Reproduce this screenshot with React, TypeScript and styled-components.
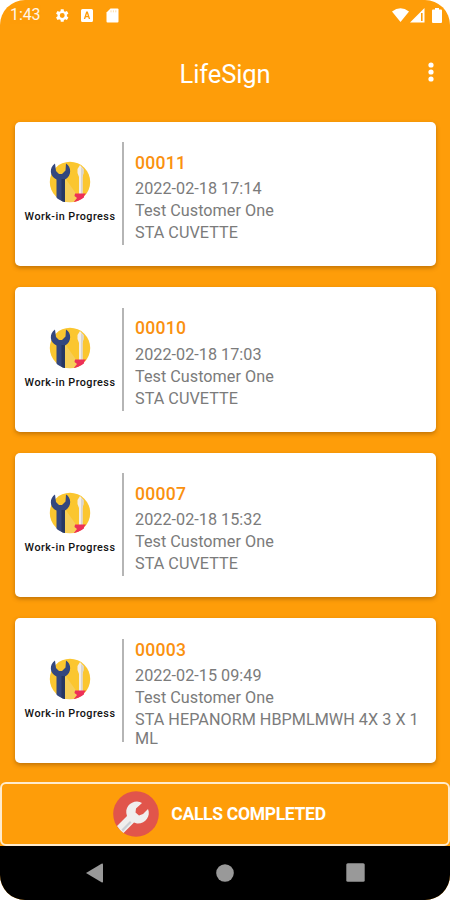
import React from "react";
import styled, { createGlobalStyle } from "styled-components";

const GlobalStyle = createGlobalStyle`
  *, *::before, *::after { box-sizing: border-box; }
  body { margin: 0; background: #fff; font-family: Roboto, sans-serif; }
`;

const Phone = styled.div`
  width: 450px;
  height: 900px;
  display: flex;
  flex-direction: column;
  overflow: hidden;
  border-radius: 25px;
  background: #fe9d09;
`;

const StatusBar = styled.div`
  height: 30px;
  flex: none;
  display: flex;
  align-items: center;
  padding: 0 8px 0 10px;
  color: #fff;
`;

const Clock = styled.span`
  width: 44px;
  font-size: 16px;
  line-height: 30px;
  letter-spacing: -0.1px;
  opacity: 0.92;
`;

const Notifications = styled.div`
  display: flex;
  align-items: center;
  gap: 12px;
  flex: 1;
`;

const Signals = styled.div`
  display: flex;
  align-items: center;
`;

const Icon = styled.svg<{ $gap?: number }>`
  display: block;
  flex: none;
  margin-left: ${(p) => p.$gap ?? 0}px;
`;

const AppBar = styled.header`
  height: 91.5px;
  flex: none;
  display: grid;
  grid-template-columns: 40px 1fr 40px;
  align-items: start;
  padding-top: 27px;
`;

const Title = styled.h1`
  grid-column: 2;
  margin: 0;
  padding-top: 1px;
  color: #fff;
  font-size: 25.5px;
  font-weight: 400;
  line-height: 32px;
  letter-spacing: -0.1px;
  text-align: center;
`;

const MenuButton = styled.button`
  height: 30px;
  border: 0;
  padding: 0 0 0 16px;
  background: none;
`;

const List = styled.main`
  height: 660.5px;
  flex: none;
  display: flex;
  flex-direction: column;
  gap: 21px;
  padding: 0 14px 0 15px;
`;

const Card = styled.article`
  height: 144.5px;
  flex: none;
  display: flex;
  align-items: center;
  border-radius: 5px;
  background: #fff;
  box-shadow: 0 2px 4px rgba(110, 60, 0, 0.42);
`;

const Status = styled.div`
  width: 107px;
  flex: none;
  display: flex;
  flex-direction: column;
  align-items: center;
  padding: 0 0 1px 3px;
`;

const StatusLabel = styled.span`
  margin-top: 6px;
  color: #111;
  font-size: 10.8px;
  font-weight: 500;
  line-height: 16px;
  letter-spacing: 0.46px;
  white-space: nowrap;
`;

const Divider = styled.div`
  width: 1.5px;
  height: 103px;
  flex: none;
  background: #b5b5b5;
`;

const Details = styled.div`
  flex: 1;
  display: flex;
  flex-direction: column;
  gap: 3px;
  padding: 7.5px 8px 0 11.5px;
`;

const CallNumber = styled.strong`
  margin-bottom: 2.5px;
  color: #fa910f;
  font-size: 17.6px;
  font-weight: 500;
  line-height: 21px;
  letter-spacing: 0.25px;
`;

const Line = styled.span`
  color: #7b7b7b;
  font-size: 16.2px;
  line-height: 19px;
  letter-spacing: 0.03px;
`;

const CompletedButton = styled.button`
  height: 64px;
  flex: none;
  display: flex;
  align-items: center;
  justify-content: center;
  gap: 12px;
  margin: 0;
  padding: 0 11px 0 0;
  border: 2px solid #ffeccd;
  border-radius: 6px;
  background: #fe9d09;
  color: #fff;
  font-family: inherit;
  font-size: 17.5px;
  font-weight: 700;
  letter-spacing: -0.3px;
`;

const NavBar = styled.nav`
  flex: 1;
  display: flex;
  align-items: center;
  justify-content: space-between;
  padding: 0 85px 1px 86px;
  background: #000;
`;

function ToolsIcon() {
  return (
    <Icon width="42" height="42" viewBox="0 0 42 42">
      <defs>
        <clipPath id="disc">
          <path d="M0 0H42V22A20.3 20.3 0 0 1 21 41.3A20 20 0 0 1 0 22Z" />
        </clipPath>
      </defs>
      <circle cx="21" cy="21" r="20.2" fill="#fbc62f" />
      <g clipPath="url(#disc)">
        <path d="M16 17L33 41H16Z" fill="#f7ce57" />
        <path d="M6 2.5C0 6.5 .5 15.5 7.5 18.5V41H16V18.5C23 15 22.5 5.5 17 2.5L16.5 9.5L13 13H10L7 10Z" fill="#34477e" />
        <path d="M12.5 18H16V41H12.5Z" fill="#273762" />
        <path d="M31 4L28.5 8V12L30 16V33H33.5V16L34.5 12V8Z" fill="#f4eee7" />
        <path d="M32 6V33H33.5V16L34.5 12V8Z" fill="#d8d5d2" />
        <path d="M26 32.5H37L35 35V38L24 42L28 37L25.5 35Z" fill="#ed3057" />
      </g>
    </Icon>
  );
}

function WrenchBadge() {
  return (
    <Icon width="46" height="46" viewBox="0 0 46 46">
      <circle cx="23" cy="23" r="22.8" fill="#e1554b" />
      <path d="M4 35L14 25C11 17 17 10.5 24 10.5Q27 10.5 29 12L23 17.5L22.5 21.5L26 24.5L30 23L35 18C38 25 32.5 33 24 32.5L21 31.5L10.5 42Q6.5 39 4 35Z" fill="#f0eeed" />
      <path d="M8.5 38.5L17 30L18.5 31.5L10 40.5Z" fill="#cbd0d5" />
    </Icon>
  );
}

const calls = [
  { id: "00011", date: "2022-02-18 17:14", item: "STA CUVETTE" },
  { id: "00010", date: "2022-02-18 17:03", item: "STA CUVETTE" },
  { id: "00007", date: "2022-02-18 15:32", item: "STA CUVETTE" },
  { id: "00003", date: "2022-02-15 09:49", item: "STA HEPANORM HBPMLMWH 4X 3 X 1 ML" },
];

export default function App() {
  return (
    <>
      <GlobalStyle />
      <Phone>
        <StatusBar>
          <Clock>1:43</Clock>
          <Notifications>
            <Icon width="15" height="15" viewBox="2 2 20 20" fill="#fff">
              <path d="M19.14 12.94a7.5 7.5 0 0 0 0-1.88l2.03-1.58-1.92-3.32-2.39.96a7 7 0 0 0-1.62-.94L14.88 3.6h-3.84l-.36 2.58a7 7 0 0 0-1.62.94l-2.39-.96-1.92 3.32 2.03 1.58a7.5 7.5 0 0 0 0 1.88l-2.03 1.58 1.92 3.32 2.39-.96q.74.57 1.62.94l.36 2.54h3.84l.36-2.54q.88-.37 1.62-.94l2.39.96 1.92-3.32ZM12.96 15.3a3.3 3.3 0 1 1 0-6.6 3.3 3.3 0 0 1 0 6.6Z" />
            </Icon>
            <Icon width="12" height="13" viewBox="0 0 12 13" fillRule="evenodd" fill="#fff">
              <path d="M1.5 0H10.5Q12 0 12 1.5V11.5Q12 13 10.5 13H1.5Q0 13 0 11.5V1.5Q0 0 1.5 0ZM5.2 2.5L2.8 10H4.2L4.8 8.2H7.2L7.8 10H9.2L6.8 2.5ZM5.2 7L6 4.5L6.8 7Z" />
            </Icon>
            <Icon width="13" height="15" viewBox="0 0 13 15" $gap={1}>
              <path d="M4.5 .5H11.5Q12.5 .5 12.5 1.5V13.5Q12.5 14.5 11.5 14.5H1.5Q.5 14.5 .5 13.5V4.5Z" fill="#fff" />
              <path d="M5 2.3V4.3M7.4 2.3V4.3M9.8 2.3V4.3" stroke="#fe9d09" strokeWidth="1" opacity=".35" />
            </Icon>
          </Notifications>
          <Signals>
            <Icon width="17" height="14" viewBox="0 0 18 14" preserveAspectRatio="none">
              <path d="M0 3.5Q9-3 18 3.5L9 14Z" fill="#fff" />
            </Icon>
            <Icon width="15" height="15" viewBox="0 0 15 15" $gap={1}>
              <path d="M0 14.5L14.5 0V14.5Z" fill="#fff" />
              <path d="M11.8 5V13" stroke="#fe9d09" strokeWidth="1.6" />
            </Icon>
            <Icon width="10" height="15" viewBox="0 0 10 15" $gap={7}>
              <path d="M3 0H7V1.5H9Q10 1.5 10 2.5V14Q10 15 9 15H1Q0 15 0 14V2.5Q0 1.5 1 1.5H3Z" fill="#fff" />
            </Icon>
          </Signals>
        </StatusBar>
        <AppBar>
          <Title>LifeSign</Title>
          <MenuButton aria-label="More options">
            <Icon width="10" height="22" viewBox="0 0 10 22" fill="#fff">
              <circle cx="5" cy="4" r="2.6" />
              <circle cx="5" cy="11" r="2.6" />
              <circle cx="5" cy="18" r="2.6" />
            </Icon>
          </MenuButton>
        </AppBar>
        <List>
          {calls.map((call) => (
            <Card key={call.id}>
              <Status>
                <ToolsIcon />
                <StatusLabel>Work-in Progress</StatusLabel>
              </Status>
              <Divider />
              <Details>
                <CallNumber>{call.id}</CallNumber>
                <Line>{call.date}</Line>
                <Line>Test Customer One</Line>
                <Line>{call.item}</Line>
              </Details>
            </Card>
          ))}
        </List>
        <CompletedButton>
          <WrenchBadge />
          CALLS COMPLETED
        </CompletedButton>
        <NavBar>
          <Icon width="17" height="20" viewBox="0 0 17 20">
            <path d="M0 10L15.5 .8Q17 0 17 1.5V18.5Q17 20 15.5 19.2Z" fill="#999" />
          </Icon>
          <Icon width="18" height="18" viewBox="0 0 18 18">
            <circle cx="9" cy="9" r="8.8" fill="#999" />
          </Icon>
          <Icon width="19" height="19" viewBox="0 0 19 19">
            <rect x=".3" y=".3" width="18.4" height="18.4" rx="1.5" fill="#999" />
          </Icon>
        </NavBar>
      </Phone>
    </>
  );
}
